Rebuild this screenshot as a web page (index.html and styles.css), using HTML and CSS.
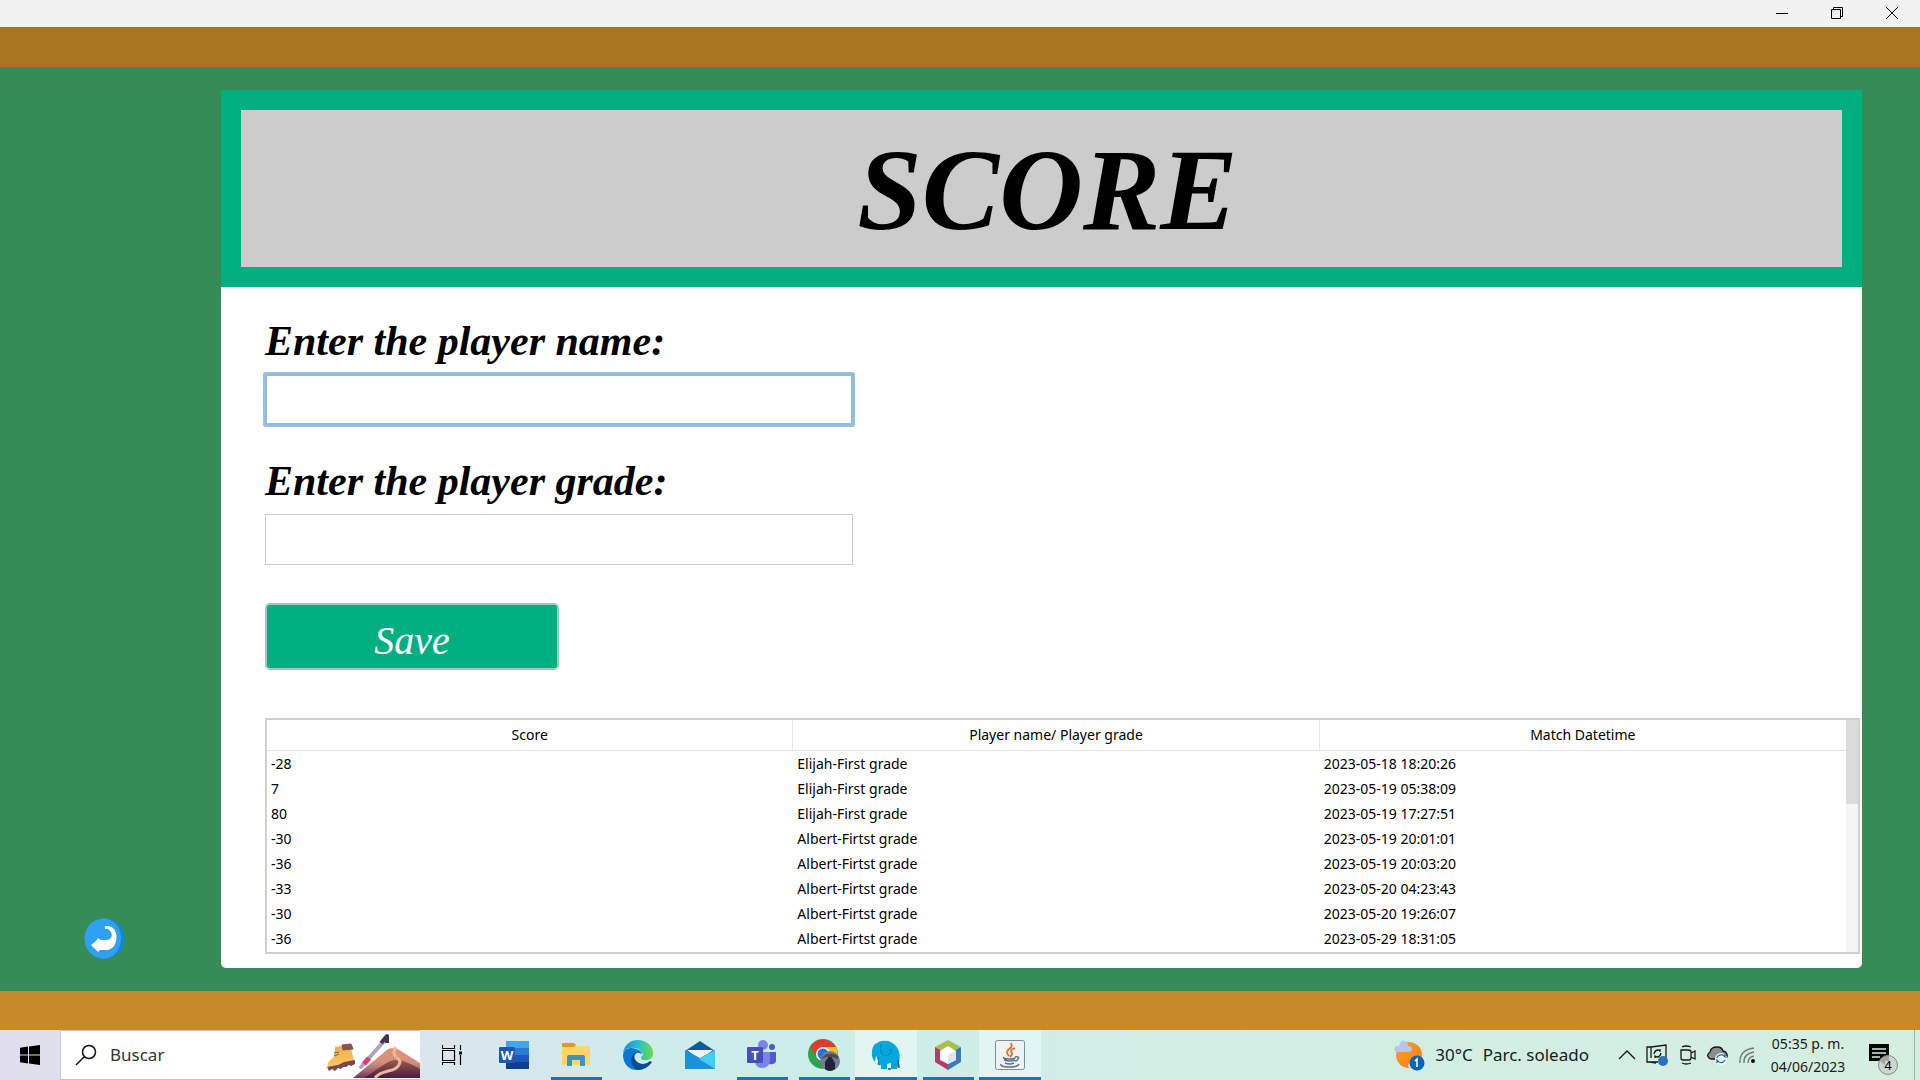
FILE: index.html
```html
<!DOCTYPE html>
<html lang="en">
<head>
<meta charset="utf-8">
<title>Score</title>
<link rel="stylesheet" href="styles.css">
</head>
<body>
<div class="window">
  <header class="titlebar">
    <button class="win-btn" aria-label="Minimize"><svg width="12" height="12" viewBox="0 0 12 12"><path d="M0 6.5H12"/></svg></button>
    <button class="win-btn" aria-label="Restore"><svg width="12" height="12" viewBox="0 0 12 12"><path d="M.5 2.500H9.500V11.500H.5ZM2.500 2.500V.5H11.500V9.500H9.500"/></svg></button>
    <button class="win-btn" aria-label="Close"><svg width="12" height="12" viewBox="0 0 12 12"><path d="M0 0L12 12M12 0L0 12"/></svg></button>
  </header>
  <div class="band band-top"></div>
  <div class="stage">
    <aside class="side">
      <button class="back" aria-label="Back">
        <svg width="41" height="41" viewBox="0 0 41 41"><circle cx="20.500" cy="20.500" r="20" fill="#0d88df"/><path d="M20 .5C8 .5 .5 10 .5 20.500S8 40.500 20 40.500C30 40.500 37 31 37 20.500S30 .5 20 .5Z" fill="#2fa1f2"/><path d="M21 8C29 7 33 13 32.500 20C32 28 28 31 24 32H16L14 34L11 31L7 27L12 23L14 20L17 22H22C27 22 29 18 27 14C25 11 23 10 21 11Z" fill="#fff"/></svg>
      </button>
    </aside>
    <main class="card">
      <div class="banner"><h1 class="banner-title">SCORE</h1></div>
      <div class="content">
        <form class="form">
          <div class="field">
            <label class="label" for="player-name">Enter the player name:</label>
            <input class="input input-active" id="player-name" type="text">
          </div>
          <div class="field">
            <label class="label" for="player-grade">Enter the player grade:</label>
            <input class="input" id="player-grade" type="text">
          </div>
          <button class="save" type="button">Save</button>
        </form>
        <div class="grid">
          <table class="scores">
            <thead><tr><th>Score</th><th>Player name/ Player grade</th><th>Match Datetime</th></tr></thead>
            <tbody>
              <tr><td>-28</td><td>Elijah-First grade</td><td>2023-05-18 18:20:26</td></tr>
              <tr><td>7</td><td>Elijah-First grade</td><td>2023-05-19 05:38:09</td></tr>
              <tr><td>80</td><td>Elijah-First grade</td><td>2023-05-19 17:27:51</td></tr>
              <tr><td>-30</td><td>Albert-Firtst grade</td><td>2023-05-19 20:01:01</td></tr>
              <tr><td>-36</td><td>Albert-Firtst grade</td><td>2023-05-19 20:03:20</td></tr>
              <tr><td>-33</td><td>Albert-Firtst grade</td><td>2023-05-20 04:23:43</td></tr>
              <tr><td>-30</td><td>Albert-Firtst grade</td><td>2023-05-20 19:26:07</td></tr>
              <tr><td>-36</td><td>Albert-Firtst grade</td><td>2023-05-29 18:31:05</td></tr>
            </tbody>
          </table>
          <div class="track"><div class="thumb"></div></div>
        </div>
      </div>
    </main>
  </div>
  <div class="band band-bottom"></div>
  <footer class="taskbar">
    <button class="start" aria-label="Start"><svg width="20" height="20" viewBox="0 0 20 20"><path d="M0 2.800L8 1.500V9.500H0ZM9 1.400L20 0V9.500H9ZM0 10.500H8V18.500L0 17.300ZM9 10.500H20V20L9 18.600Z"/></svg></button>
    <div class="search">
      <svg class="search-icon" width="22" height="22" viewBox="0 0 22 22" fill="none" stroke="#111" stroke-width="1.500"><circle cx="14" cy="8" r="6.500"/><path d="M9 13L1 21"/></svg>
      <input class="search-input" type="text" aria-label="Buscar" placeholder="Buscar">
      <svg width="94" height="46" viewBox="0 0 94 46">
        <defs>
          <linearGradient id="boot" x2="0" y2="1"><stop stop-color="#e8b050"/><stop offset="1" stop-color="#ffc660"/></linearGradient>
          <linearGradient id="hill" x2="0" y2="1"><stop stop-color="#e8936f"/><stop offset=".5" stop-color="#d09080"/><stop offset="1" stop-color="#743858"/></linearGradient>
          <linearGradient id="dark" x2="0" y2="1"><stop stop-color="#a05c48"/><stop offset="1" stop-color="#4a1b42"/></linearGradient>
        </defs>
        <path d="M9 15L24 12L28 29L2 36C0 31 5 27 8 25Z" fill="url(#boot)"/>
        <path d="M16 13L25 12L27 17L17 18ZM8 21L13 20M8 24L13 22" fill="#88554d" stroke="#88554d"/>
        <path d="M1 35L12 33L18 30L29 28V32L25 34L23 33L20 35L17 35L15 37L12 36L9 39L6 37L3 39Z" fill="#7a4854"/>
        <path d="M35 35L60 7" stroke="#a9a6bd" stroke-width="4" stroke-linecap="round"/><path d="M38 32L43 26" stroke="#ff3066" stroke-width="5"/><path d="M55 11L61 4L61 11" stroke="#463655" stroke-width="4" fill="none" stroke-linejoin="round"/>
        <path d="M27 46L62 17Q69 14 75 19L94 31V46Z" fill="url(#hill)"/><path d="M38 46C51 38 61 29 68 28Q75 26 94 37V46Z" fill="url(#dark)"/><path d="M49 46C57 36 71 42 74 30Q73 26 70 26M70 15Q66 20 70 25" fill="none" stroke="#eab8a0" stroke-width="3"/>
      </svg>
    </div>
    <nav class="apps">
      <button class="app" aria-label="Task view"><svg width="20" height="20" viewBox="0 0 20 20" fill="none" stroke="#000"><path d="M.5 5.500H12.500V15.500H.5ZM.5 0V3.500H12.500V0M.5 20V17.500H12.500V20M18.500 0V5M18.500 10V20" stroke-width="1.200"/><path d="M17 6.500H20V9.500H17Z" fill="#000" stroke="none"/></svg></button>
      <button class="app" aria-label="Word"><svg width="30" height="30" viewBox="0 0 30 30"><path d="M7 1H30V8H7Z" fill="#41a5ee"/><path d="M7 8H30V15H7Z" fill="#2b7cd3"/><path d="M7 15H30V22H7Z" fill="#185abd"/><path d="M7 22H30V29H7Z" fill="#103f91"/><rect y="7" width="16" height="16" rx="1" fill="#1e57b5"/><text x="8" y="20" class="glyph">W</text></svg></button>
      <button class="app open" aria-label="File Explorer"><svg width="28" height="26" viewBox="0 0 28 26"><path d="M0 2Q0 1 2 1H12L14 4H27Q28 4 28 6V23H0Z" fill="#ffd566"/><path d="M0 5V2Q0 1 2 1H12L14 3L12 5Z" fill="#e29d00"/><path d="M5 24V15Q5 13 7 13H21Q23 13 23 15V24H18V18H10V24Z" fill="#3b90d0"/></svg></button>
      <button class="app" aria-label="Edge"><svg width="30" height="30" viewBox="0 0 30 30"><defs><linearGradient id="eg"><stop stop-color="#198fd8"/><stop offset=".5" stop-color="#26bfce"/><stop offset="1" stop-color="#69dd45"/></linearGradient></defs><path d="M0 14C1 4 8 0 15 0C24 0 31 7 30 14C30 19 25 21 20 20C17 19 18 17 20 15C20 11 13 7 8 8C4 8 1 10 0 14Z" fill="url(#eg)"/><path d="M0 15C1 8 8 7 13 9C17 10 19 12 19 14C12 10 9 18 12 23C13 27 17 29 20 29C8 33 0 25 0 15Z" fill="#0879d3"/><path d="M13 12C9 15 12 24 20 24Q24 24 27 21L29 22C26 27 20 30 15 30C9 28 7 21 9 16Q10 13 13 12Z" fill="#0b4c91"/></svg></button>
      <button class="app" aria-label="Mail"><svg width="30" height="30" viewBox="0 0 30 30"><path d="M0 11L15 1L30 11V15H0Z" fill="#0a5ba7"/><path d="M2 10H28L15 20Z" fill="#f4f4f4"/><path d="M0 10L15 18L30 10V29H0Z" fill="#1a93db"/><path d="M30 10V29L14 19Z" fill="#43ccf8"/></svg></button>
      <button class="app open" aria-label="Teams"><svg width="30" height="30" viewBox="0 0 30 30"><circle cx="25" cy="7" r="3" fill="#5059c9"/><circle cx="16" cy="5" r="5" fill="#7b83eb"/><path d="M20 12H29V21Q28 25 22 24Z" fill="#5059c9"/><path d="M8 12H23V21Q22 28 15 28Q8 28 8 20Z" fill="#7b83eb"/><rect y="7" width="16" height="16" rx="1" fill="#474fbb"/><text x="8" y="20" class="glyph">T</text></svg></button>
      <button class="app open" aria-label="Chrome"><svg width="32" height="32" viewBox="0 0 32 32"><circle cx="15" cy="15" r="15" fill="#2ca34f"/><path d="M2 8A15 15 0 0 1 28 8H15L9 18Z" fill="#e8392e"/><path d="M28 8A15 15 0 0 1 15 30L21 17L16 8Z" fill="#fbc02d"/><circle cx="15" cy="15" r="7" fill="#fff"/><circle cx="15" cy="15" r="5.500" fill="#2474e5"/><circle cx="22" cy="22" r="10" fill="#77798c"/><path d="M17 30V23L20 19Q22 14 24 19L27 24V30Q22 34 17 30Z" fill="#202438"/><path d="M13 20Q20 11 30 17V20L24 18H18Z" fill="#4c4b55"/></svg></button>
      <button class="app open current" aria-label="MySQL"><svg width="30" height="30" viewBox="0 0 30 30"><path d="M6 3Q10 0 17 1Q25 3 28 12Q30 19 26 29H20V23L16 24V29H10V25Q6 26 4 22Q0 18 1 11Q2 4 6 3Z" fill="#00a8df"/><path d="M10 4Q8 14 14 16Q21 15 20 9M8 17Q6 20 8 25" fill="none" stroke="#057da9"/><path d="M5 16Q8 20 6 26L4 21Z" fill="#fff"/><path d="M27 20L28 28M17 29H20" stroke="#345760" stroke-width="1.500"/></svg></button>
      <button class="app open" aria-label="NetBeans"><svg width="28" height="30" viewBox="0 0 28 30"><path d="M14 0L27 7L14 14L1 7Z" fill="#a8bf4a"/><path d="M1 7L14 14V30L1 22Z" fill="#b93b62"/><path d="M27 7L14 14V30L27 22Z" fill="#347cba"/><path d="M14 6L22 11V20L14 24L6 20V11Z" fill="#fff"/><path d="M14 15L22 11V20L14 24Z" fill="#dce5ea"/></svg></button>
      <button class="app open current" aria-label="Java"><svg width="30" height="30" viewBox="0 0 30 30"><rect x=".5" y=".5" width="29" height="29" rx="2" fill="#f0f1f3" stroke="#7c8c98"/><path d="M16 3Q18 7 14 9Q10 12 14 16M20 8Q14 10 17 13Q18 14 15 17" fill="none" stroke="#e56e25" stroke-width="1.800"/><path d="M9 17Q7 19 14 19T20 17M9 20Q15 22 20 20M10 23Q15 25 19 23M20 17Q25 16 23 19Q22 21 20 21M6 24Q5 27 14 27T24 24" fill="none" stroke="#557891" stroke-width="1.500"/></svg></button>
    </nav>
    <div class="tray">
      <button class="weather"><svg width="31" height="31" viewBox="0 0 31 31"><defs><linearGradient id="sun" x2="1" y2="1"><stop stop-color="#f9a030"/><stop offset="1" stop-color="#f77c10"/></linearGradient></defs><circle cx="15" cy="15" r="13" fill="url(#sun)"/><path d="M3 12Q-1 11 1 7Q3 5 5 6Q6 0 11 1Q14 2 14 6Q18 6 18 9Q18 12 14 12Z" fill="#b4c7ec"/><path d="M16 28Q12 26 16 22Q20 16 25 21Z" fill="#e2e8f5"/><circle cx="23" cy="23" r="7.500" fill="#0764b8"/><path d="M21 21L23 19V27" fill="none" stroke="#fff" stroke-width="1.500"/></svg><span>30°C</span><span>Parc. soleado</span></button>
      <div class="tray-icons">
        <svg width="22" height="22" viewBox="0 0 22 22"><path d="M3 15L11 7L19 15"/></svg>
        <svg width="22" height="22" viewBox="0 0 22 22"><path d="M5 3L20 1V14M5 3H1V18H12M5 3V14M4 18L10 19M8 10Q9 6 12 6L14 7V5M15 9Q14 13 11 13L9 12V14"/><circle cx="17" cy="17" r="5" fill="#2b70bd" stroke="none"/></svg>
        <svg width="22" height="22" viewBox="0 0 22 22"><path d="M5 6H13Q15 6 15 8V14Q15 16 13 16H7Q5 16 5 14ZM15 9L19 7V15L15 13M6 3Q10 1 15 3M6 19Q10 21 15 19"/></svg>
        <svg width="22" height="22" viewBox="0 0 22 22"><path d="M3 14Q0 11 4 8Q5 3 11 3Q16 3 17 7Q22 8 21 13Q20 15 18 15H5Z" fill="#8b8f90"/><circle cx="15" cy="15" r="6" fill="#eff9fb" stroke="none"/><path d="M11 14Q12 10 17 11L19 13V10M19 16Q17 20 13 18L11 16V19" stroke="#1671bf"/></svg>
        <svg width="22" height="22" viewBox="0 0 22 22"><path d="M4 19Q3 6 18 4M8 19Q7 10 18 8M12 19Q12 13 18 12" stroke="#6d7b76"/><circle cx="17" cy="17" r="2" fill="#111" stroke="none"/></svg>
      </div>
      <button class="clock"><span>05:35 p. m.</span><span>04/06/2023</span></button>
      <button class="notices" aria-label="Notifications, 4 new"><svg width="32" height="32" viewBox="0 0 32 32"><path d="M1 5H21V22H17V26L12 22H1Z" fill="#050505"/><path d="M4 10H18M4 14H18M4 18H12" stroke="#d4eee1" stroke-width="1.500"/></svg><span class="badge">4</span></button>
    </div>
  </footer>
</div>
</body>
</html>
```
FILE: styles.css
```css
* { box-sizing: border-box; }
body { margin: 0; font-family: "Noto Sans", "Open Sans", sans-serif; color: #000; }
button { border: 0; padding: 0; background: none; font: inherit; color: inherit; }
svg { display: block; flex: none; }

.window { display: flex; flex-direction: column; min-height: 100vh; background: #368c57; }
.titlebar { display: flex; justify-content: flex-end; height: 27px; padding: 0 1px 1px 0; background: #f1f1f1; }
.win-btn { display: flex; align-items: center; justify-content: center; width: 55px; }
.win-btn svg { fill: none; stroke: #000; }
.band-top { height: 40px; background: #a87420; }
.band-bottom { height: 39px; background: #c68a2a; }

.stage { display: flex; flex: 1; padding: 23px 58px 23px 0; }
.side { display: flex; align-items: flex-end; width: 221px; padding: 0 0 9px 84px; }
.card { display: flex; flex-direction: column; flex: 1; min-width: 0; background: #fff; border-radius: 0 0 5px 5px; }
.banner { display: flex; justify-content: center; height: 197px; padding-left: 12px; border: 20px solid #00af80; background: #ccc; }
.banner-title { margin: 0; font: italic bold 116px/160px "Liberation Serif", serif; }
.content { display: flex; flex-direction: column; gap: 48px; flex: 1; padding: 26px 2px 14px 44px; }
.form { display: flex; flex-direction: column; gap: 28px; }
.field { display: flex; flex-direction: column; align-items: flex-start; gap: 9px; }
.label { padding-top: 4px; font: italic bold 42px/48px "Liberation Serif", serif; }
.input { width: 100%; max-width: 588px; height: 51px; padding: 0 12px; border: 1px solid #cbcbcb; outline: 0; background: #fff; font-size: 20px; }
.input-active { border: 2px solid #93bbe2; border-radius: 1px; box-shadow: 0 0 0 2px #93bfea; }
.save { width: 294px; height: 67px; margin-top: 10px; padding-top: 8px; border: 2px solid #9bcaba; border-radius: 5px; background: #00af80; color: #fff; font: italic 40px/48px "Liberation Serif", serif; }

.grid { display: flex; flex: 1; min-height: 236px; border: 2px solid #d0d0d0; }
.scores { flex: 1; width: 100%; align-self: flex-start; table-layout: fixed; border-collapse: separate; border-spacing: 0; font-size: 14px; line-height: 25px; }
.scores th { height: 31px; padding: 0 0 2px; border-right: 1px solid #e6e6e6; border-bottom: 1px solid #e3e3e3; font-weight: 400; }
.scores th:last-child { border-right: 0; }
.scores td { height: 25px; padding: 0 4px; }
.track { flex: none; width: 12px; background: #f5f5f5; }
.thumb { height: 84px; background: #dbdbdb; }

.taskbar { display: flex; height: 50px; background: linear-gradient(90deg, #e0deec 0, #dae6ee 23%, #cbedeb 38%, #d1eee5 60%, #d4efe0 100%); }
.start { display: flex; align-items: center; justify-content: center; width: 60px; }
.search { display: flex; align-items: center; width: 360px; padding: 0 0 0 14px; border: 1px solid #c5c5c8; border-right: 0; background: #fff; }
.search-icon { margin-right: 13px; }
.search-input { flex: 1; min-width: 0; border: 0; padding: 0; outline: 0; font: 17px/24px "Noto Sans", sans-serif; }
.search-input::placeholder { color: #333; opacity: 1; }
.apps { display: flex; padding-left: 1px; }
.app { display: flex; align-items: center; justify-content: center; width: 62px; }
.open { background: linear-gradient(#0078d7, #0078d7) bottom / 51px 3px no-repeat; }
.current { background: linear-gradient(#0078d7, #0078d7) bottom / 100% 3px no-repeat, #e1f5f2; }
.glyph { fill: #fff; font: bold 13px "Noto Sans", sans-serif; text-anchor: middle; }
.tray { display: flex; align-items: center; margin-left: auto; padding-right: 5px; }
.weather { display: flex; align-items: center; gap: 10px; margin-right: 27px; font-size: 17px; line-height: 24px; color: #1a1a1a; }
.tray-icons { display: flex; gap: 8px; }
.tray-icons svg { fill: none; stroke: #161616; stroke-width: 1.3; }
.clock { display: flex; flex-direction: column; align-items: center; width: 100px; font-size: 14px; line-height: 23px; color: #1a1a1a; }
.notices { position: relative; display: flex; align-items: center; height: 50px; width: 57px; padding-left: 10px; border-right: 1px solid #9fb5aa; }
.badge { position: absolute; left: 20px; top: 25px; width: 20px; height: 20px; border: 1px solid #858b87; border-radius: 50%; background: #c9d0cccc; font-size: 13px; line-height: 18px; text-align: center; }
```
